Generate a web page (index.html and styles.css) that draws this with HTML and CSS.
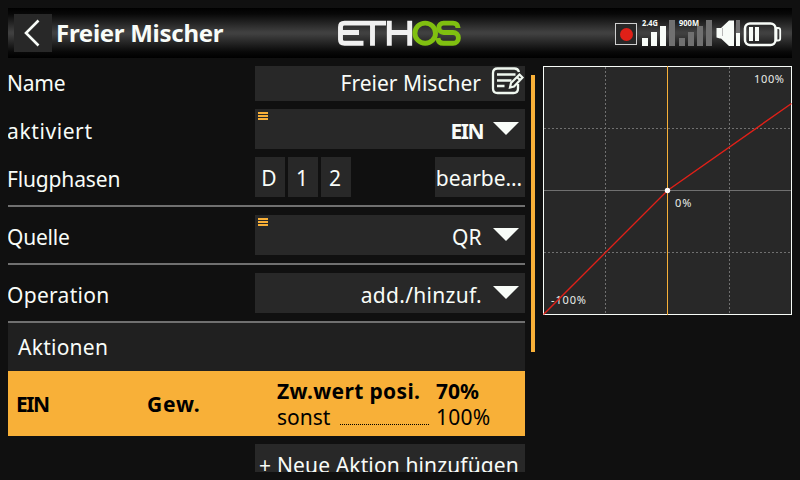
FILE: index.html
```html
<!DOCTYPE html>
<html lang="de">
<head>
<meta charset="utf-8">
<title>Freier Mischer</title>
<link rel="stylesheet" href="styles.css">
</head>
<body>
<div class="screen">
  <header class="topbar">
    <div class="back">
      <svg width="38" height="38" viewBox="0 0 38 38"><path d="M24.500 6.500 12 19l12.500 12.500" fill="none" stroke="#f8fcf8" stroke-width="2.600"/></svg>
    </div>
    <h1 class="title">Freier Mischer</h1>
    <svg class="logo" width="126" height="28" viewBox="0 0 126 28" fill="none" stroke-width="4.900" role="img" aria-label="ETHOS">
      <g stroke="#f0f0f0">
        <path d="M50 4.100H8.500Q4.500 4.100 4.500 8V20.500Q4.500 24.300 8.500 24.300H27.500M4.500 13.500H23M36.500 4V26.700M53.300 1.700V26.700M53.300 13.500H74M73.700 1.700V26.700"/>
      </g>
      <g stroke="#80c010">
        <ellipse cx="89.200" cy="14.200" rx="10.300" ry="10.100"/>
        <path d="M122 9V8.500Q121.500 4.100 117 4.100H107.500A4.700 4.700 0 0 0 107.500 13.500H117A5.400 5.400 0 0 1 117 24.300H107.500Q102.300 24.300 102 19"/>
      </g>
    </svg>
    <svg class="status" width="168" height="30" viewBox="614 18 168 30">
      <rect x="615.500" y="23.500" width="21" height="21" fill="#282828" stroke="#d0d0d0"/>
      <circle cx="626.500" cy="34.500" r="6.500" fill="#e02018"/>
      <path fill="#f8fcf8" d="M642 38h6v8h-6zM651 32h6v14h-6zM660 26h6v20h-6z"/>
      <path fill="#707070" d="M669 20h6v26h-6zM679 38h6v8h-6zM688 32h6v14h-6zM697 26h6v20h-6zM706 20h6v26h-6z"/>
      <text class="band" x="642" y="26" textLength="16" lengthAdjust="spacingAndGlyphs">2.4G</text>
      <text class="band" x="679" y="26" textLength="20" lengthAdjust="spacingAndGlyphs">900M</text>
      <path fill="#f8fcf8" d="M716.500 28h4.500l8-7.500h5v25.500h-5l-8-7.500h-1l-3.500-1z"/>
      <path d="M722.500 28v8" stroke="#b8b8b8"/>
      <path fill="#707070" d="M736 20h4v13h-4z"/>
      <path fill="#f8fcf8" d="M736 33h4v13h-4z"/>
      <rect x="745" y="23.500" width="30.500" height="21.500" rx="5" fill="none" stroke="#f8fcf8" stroke-width="2.500"/>
      <path d="M776.500 28h1.500q2.200 0 2.200 2v8.500q0 2-2.200 2h-1.500z" fill="none" stroke="#f8fcf8" stroke-width="1.800"/>
      <path fill="#f8fcf8" d="M749 27h4v14h-4zM755 27h4v14h-4z"/>
    </svg>
  </header>

  <main class="content">
    <section class="form">
      <div class="row row-first">
        <span class="label l-name">Name</span>
        <div class="field">
          <span class="value">Freier Mischer</span>
          <svg class="edit" width="34" height="35" viewBox="0 0 34 35" fill="none" stroke="#f0f8f0" stroke-width="2.300">
            <path d="M28 6Q27 2.500 23.500 2.500H6.500Q2 2.500 2 7V22.500Q2 27 6.500 27H22.500Q27 27 27 22.500V18"/>
            <path d="M6 8.500H24.500M6 14.500H20.500M6 20H13.500"/>
            <path d="M19 21.500 20 17 28.500 8.500 31.500 11.500 23 20.500ZM26 11l3 3" fill="#282828" stroke-width="2.200"/>
          </svg>
        </div>
      </div>
      <div class="row">
        <span class="label l-active">aktiviert</span>
        <div class="field">
          <i class="menu"></i><b class="value v-ein">EIN</b><i class="arrow"></i>
        </div>
      </div>
      <div class="row ruled">
        <span class="label l-phases">Flugphasen</span>
        <div class="phases">
          <span class="chip">D</span><span class="chip">1</span><span class="chip">2</span>
          <span class="chip edit-btn">bearbe...</span>
        </div>
      </div>
      <div class="row ruled">
        <span class="label l-source">Quelle</span>
        <div class="field"><i class="menu"></i><span class="value v-qr">QR</span><i class="arrow"></i></div>
      </div>
      <div class="row ruled">
        <span class="label l-op">Operation</span>
        <div class="field"><span class="value v-add">add./hinzuf.</span><i class="arrow"></i></div>
      </div>
      <div class="section-head"><span class="l-actions">Aktionen</span></div>
      <div class="action">
        <b class="a-ein">EIN</b>
        <b class="a-gew">Gew.</b>
        <div class="pairs">
          <b class="p-pos">Zw.wert posi.</b><b class="p-70">70%</b>
          <span class="else"><span>sonst</span><i class="dots"></i></span><span class="p-100">100%</span>
        </div>
      </div>
      <div class="add"><span class="plus">+</span><span class="add-text">Neue Aktion hinzufügen</span></div>
    </section>
    <div class="scrollbar"></div>
    <svg class="chart" width="249" height="249" viewBox="0 0 249 249">
      <rect x="0.500" y="0.500" width="248" height="248" fill="#282828" stroke="#f8fcf8"/>
      <path d="M62.500 1V248M186.500 1V248M1 62.500H248M1 186.500H248" stroke="#707070" stroke-dasharray="2 2"/>
      <path d="M1 124.500H248" stroke="#707070"/>
      <path d="M124.500 0V249" stroke="#f8b038"/>
      <text class="tick" x="211" y="17" textLength="30">100%</text>
      <text class="tick" x="132" y="141" textLength="16.500">0%</text>
      <text class="tick" x="8" y="238" textLength="35">-100%</text>
      <path d="M0.500 248.500 124.500 124.500 248.500 37.500" fill="none" stroke="#e02018" stroke-width="1.400"/>
      <circle cx="124.500" cy="124.500" r="2.700" fill="#fff"/>
    </svg>
  </main>
</div>
</body>
</html>
```

FILE: styles.css
```css
* { box-sizing: border-box; }

body {
  margin: 0;
  background: #101010;
  color: #f8fcf8;
  font: 21px/40px "Noto Sans", sans-serif;
}

.screen {
  width: 800px;
  height: 480px;
  padding: 8px;
  overflow: hidden;
}

.topbar {
  display: flex;
  align-items: center;
  height: 50px;
  padding: 0 10px 0 6px;
  background: linear-gradient(#000 0, #080808 12%, #404040 48%, #404040 52%, #080808 88%, #000 100%);
}

.back { width: 38px; height: 38px; background: #282828; }
.back svg { display: block; }

.title {
  width: 280px;
  margin: 0 0 0 4px;
  font-size: 24px;
  line-height: 50px;
  letter-spacing: -0.28px;
  white-space: nowrap;
}

.logo { margin-right: auto; }
.status { display: block; }
.band { font: bold 8px "Noto Sans", sans-serif; fill: #f8fcf8; }

.content {
  display: flex;
  align-items: flex-start;
  height: 406px;
  margin-top: 8px;
}

.form {
  width: 517px;
  height: 406px;
  overflow: hidden;
}

.row {
  display: grid;
  grid-template-columns: 247px 270px;
  height: 40px;
  margin-bottom: 8px;
  white-space: nowrap;
}

.row-first { height: 35px; line-height: 32px; }
.row.ruled { height: 50px; border-bottom: 2px solid #707070; }
.row.ruled:nth-child(5) { margin-bottom: 0; }
.label { padding-top: 2px; text-indent: -1px; }
.l-name { padding-top: 1px; letter-spacing: -0.25px; }
.l-active { letter-spacing: 0.6px; }
.l-phases { letter-spacing: -0.15px; }
.l-source { letter-spacing: -0.2px; }
.l-op { letter-spacing: 0.3px; }
.l-actions { letter-spacing: 0.25px; }

.field {
  position: relative;
  display: flex;
  justify-content: flex-end;
  height: 40px;
  background: #282828;
}

.row-first .field { height: 35px; }
.value { padding-top: 2px; }
.v-ein { letter-spacing: -1.5px; margin-right: -1px; }
.v-add { letter-spacing: 0.3px; }
.v-qr { letter-spacing: 0.3px; }
.row-first .value { padding-top: 1px; }
.edit { margin-left: 10px; }

.arrow {
  width: 26px;
  height: 13px;
  margin: 13px 6px 0 11px;
  background: #f8fcf8;
  clip-path: polygon(0 0, 100% 0, 50% 100%);
}

.menu {
  position: absolute;
  left: 3px;
  top: 3px;
  width: 10px;
  height: 8px;
  background: repeating-linear-gradient(#f8b038 0 2px, transparent 2px 3px);
}

.phases { display: flex; gap: 3px; }
.chip { width: 30px; height: 40px; padding-right: 2px; line-height: 42px; text-align: center; background: #282828; }
.edit-btn { width: 90px; margin-left: auto; letter-spacing: -0.05px; }

.section-head { height: 48px; padding-left: 10px; line-height: 48px; background: #202020; }

.action {
  display: grid;
  grid-template-columns: 131px 130px 1fr;
  height: 65px;
  padding-left: 8px;
  line-height: 66px;
  color: #000;
  background: #f8b038;
  white-space: nowrap;
}

.a-ein { letter-spacing: -1.5px; }
.a-gew { letter-spacing: 0.8px; }

.pairs {
  display: grid;
  grid-template-columns: 159px 1fr;
  grid-template-rows: 26px 26px;
  padding-top: 7px;
  line-height: 26px;
}

.p-pos { letter-spacing: 0.35px; }
.p-100 { letter-spacing: 0.2px; }
.else { display: flex; }

.dots {
  width: 89px;
  height: 1px;
  margin: 20px 7px 0 auto;
  background: repeating-linear-gradient(90deg, #000 0 1px, transparent 1px 2px);
}

.add {
  display: flex;
  gap: 6px;
  width: 270px;
  height: 40px;
  margin: 8px 0 0 247px;
  padding-left: 4px;
  line-height: 42px;
  background: #282828;
  white-space: nowrap;
}

.add-text { letter-spacing: 0.13px; }

.scrollbar { width: 4px; height: 277px; margin: 9px 8px 0 6px; background: #f8b038; }
.chart { display: block; }
.tick { font: 11px "Noto Sans", sans-serif; fill: #e8ece8; }
```
